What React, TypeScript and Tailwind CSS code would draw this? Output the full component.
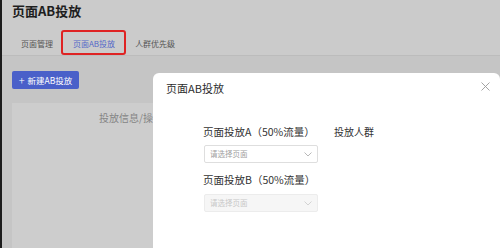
import React from "react";

const font = { fontFamily: '"Noto Sans CJK SC", "Noto Sans", sans-serif' };

function Chevron({ color }: { color: string }) {
  return (
    <svg width="8" height="5" viewBox="0 0 8 5" fill="none">
      <path d="M0.5 0.5 L4 4 L7.5 0.5" stroke={color} strokeWidth="0.9" />
    </svg>
  );
}

export default function App() {
  return (
    <div
      className="relative w-[500px] h-[248px] overflow-hidden bg-[#c5c5c5] border-l-2 border-[#1c1c1c] flex flex-col"
      style={font}
    >
      {/* header */}
      <div className="h-[56px] bg-[#cbcbcb] border-b border-[#bcbcbc] flex flex-col pl-[10px] shrink-0">
        <div className="pt-[3px] text-[13px] leading-[16px] font-bold text-[#1e1e1e]">页面AB投放</div>
        <div className="mt-[15px] h-[20px] flex items-center gap-[20px] pl-[9px] text-[8px] text-[#555]">
          <span>页面管理</span>
          <span className="text-[#5468c8]">页面AB投放</span>
          <span>人群优先级</span>
        </div>
      </div>

      {/* body */}
      <div className="flex-1 flex flex-col pl-[10px] pt-[15px]">
        <div className="w-[67px] h-[18px] rounded-[2px] bg-[#4a60c9] text-white text-[8.5px] flex items-center justify-center gap-[3px]">
          <span className="text-[11px] leading-none font-light">+</span>
          <span>新建AB投放</span>
        </div>
        <div className="mt-[14px] w-[238px] flex-1 bg-[#cdcdcd] flex justify-center pt-[8px]">
          <span className="text-[10px] leading-[14px] text-[#858585]">投放信息/操作</span>
        </div>
      </div>

      {/* red annotation */}
      <div className="absolute left-[59px] top-[30px] w-[65px] h-[25px] border-2 border-[#df2323] rounded-[3px]" />

      {/* modal */}
      <div className="absolute left-[151px] top-[73px] right-[0px] bottom-0 bg-white rounded-t-[6px] flex flex-col">
        <div className="h-[30px] flex items-center justify-between pl-[13px] pr-[10px]">
          <span className="text-[11px] text-[#2e2e2e]">页面AB投放</span>
          <svg width="9" height="9" viewBox="0 0 9 9" className="mt-[-3px]">
            <path d="M0.5 0.5 L8.5 8.5 M8.5 0.5 L0.5 8.5" stroke="#9a9a9a" strokeWidth="0.9" />
          </svg>
        </div>
        <div className="pl-[50px] pt-[22px] flex">
          <div className="w-[131px] flex flex-col">
            <div className="text-[10.5px] leading-[14px] text-[#333]">页面投放A（50%流量）</div>
            <div className="mt-[6px] ml-[1px] w-[114px] h-[18px] border border-[#dedede] rounded-[2px] flex items-center justify-between pl-[5px] pr-[5px]">
              <span className="text-[7.5px] text-[#a0a0a0]">请选择页面</span>
              <Chevron color="#b0b0b0" />
            </div>
            <div className="mt-[10px] text-[10.5px] leading-[14px] text-[#333]">页面投放B（50%流量）</div>
            <div className="mt-[7px] ml-[1px] w-[114px] h-[18px] border border-[#ececec] bg-[#f6f6f6] rounded-[2px] flex items-center justify-between pl-[5px] pr-[5px]">
              <span className="text-[7.5px] text-[#c8c8c8]">请选择页面</span>
              <Chevron color="#cfcfcf" />
            </div>
          </div>
          <div className="text-[10px] leading-[14px] text-[#333]">投放人群</div>
        </div>
      </div>
    </div>
  );
}
